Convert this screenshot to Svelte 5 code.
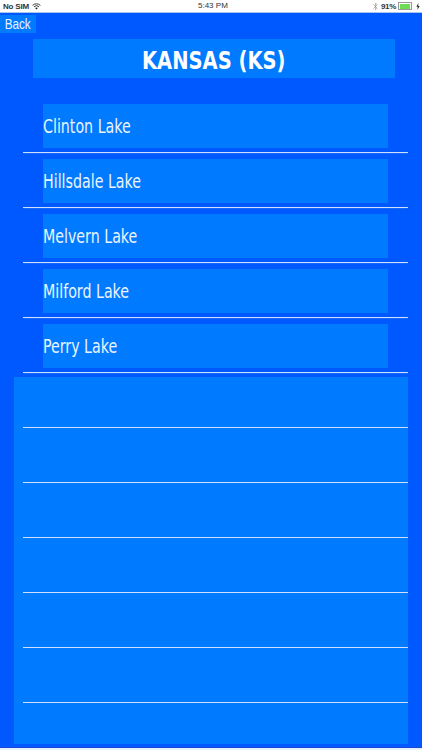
<script>
  const lakes = ['Clinton Lake', 'Hillsdale Lake', 'Melvern Lake', 'Milford Lake', 'Perry Lake'];
  const emptyRows = [0, 1, 2, 3, 4, 5, 6];
</script>

<div class="page">
  <header class="status">
    <div class="carrier">
      <span class="squeeze">No SIM</span>
      <svg width="9" height="7" viewBox="0 0 9 7">
        <path d="M0.6 2.4a5.6 5.6 0 0 1 7.8 0M2 3.8a3.6 3.6 0 0 1 5 0" fill="none" stroke="#222" stroke-width="0.9" />
        <path d="M4.5 6.6L3.1 5.1a2 2 0 0 1 2.8 0z" fill="#222" />
      </svg>
    </div>
    <span class="time">5:43 PM</span>
    <div class="power">
      <svg width="5" height="9" viewBox="0 0 5 9">
        <path d="M0.4 2.4L4.2 6.2L2.4 8V1L4.2 2.8L0.4 6.6" fill="none" stroke="#999" stroke-width="0.7" />
      </svg>
      <span class="pct">91%</span>
      <div class="battery"><div class="charge"></div></div>
      <svg width="4" height="7" viewBox="0 0 4 7">
        <path d="M2.4 0L0.4 3.8H1.8L1.4 7L3.6 3H2.2z" fill="#222" />
      </svg>
    </div>
  </header>

  <button class="back"><span>Back</span></button>
  <h1 class="title"><span>KANSAS (KS)</span></h1>

  <ul class="lakes">
    {#each lakes as lake}
      <li class="row">
        <div class="cell"><span>{lake}</span></div>
      </li>
    {/each}
  </ul>

  <ul class="empty">
    {#each emptyRows as r}
      <li class="blank"></li>
    {/each}
  </ul>

  <div class="edge"></div>
</div>

<style>
  :global(body) {
    margin: 0;
    background: #0059ff;
  }

  .page {
    width: 422px;
    height: 750px;
    overflow: hidden;
    background: #0059ff;
    display: flex;
    flex-direction: column;
    font-family: "DejaVu Sans Condensed", "DejaVu Sans", sans-serif;
    color: #eaf4ff;
  }

  .status {
    height: 12px;
    flex: none;
    background: #fff;
    border-bottom: 1px solid #a9c4ee;
    padding: 0 2px 0 3px;
    display: flex;
    align-items: center;
    justify-content: space-between;
    position: relative;
    font-family: "Liberation Sans", sans-serif;
    font-size: 8px;
    font-weight: 700;
    color: #333;
  }

  .carrier, .power {
    display: flex;
    align-items: center;
    gap: 3px;
  }

  .time {
    position: absolute;
    left: 198px;
    top: 1px;
    font-weight: 400;
  }

  .pct {
    letter-spacing: -0.3px;
    margin-right: -1px;
  }

  .squeeze {
    letter-spacing: -0.2px;
  }

  .battery {
    width: 11px;
    height: 5px;
    padding: 0.5px;
    border: 0.5px solid #999;
    margin-right: 1px;
  }

  .charge {
    width: 91%;
    height: 100%;
    background: #6fdc55;
  }

  .back {
    align-self: flex-start;
    width: 36px;
    height: 18px;
    margin-top: 2px;
    padding: 0 0 2px;
    border: 0;
    background: #007aff;
    color: #eaf4ff;
    font-family: "Liberation Sans", sans-serif;
    font-size: 15px;
  }

  .back span {
    display: inline-block;
    transform: scaleX(0.78);
  }

  .title {
    flex: none;
    margin: 6px 27px 0 33px;
    height: 39px;
    line-height: 43px;
    background: #007aff;
    color: #fff;
    text-align: center;
    font-size: 25px;
    font-weight: 700;
  }

  .title span {
    display: inline-block;
    transform: scaleX(0.867);
  }

  .lakes, .empty {
    list-style: none;
    margin: 0;
    padding: 0;
  }

  .lakes {
    margin: 20px 14px 0 23px;
  }

  .row {
    height: 48px;
    border-bottom: 1px solid #cfe0ff;
    padding-top: 6px;
    box-shadow: 0 1px 1px -1px rgba(150, 190, 255, 0.8);
  }

  .cell {
    margin: 0 20px;
    height: 44px;
    line-height: 45px;
    background: #007aff;
    font-size: 20px;
  }

  .cell span {
    display: inline-block;
    transform: scaleX(0.79);
    transform-origin: left center;
  }

  .empty {
    flex: none;
    margin: 4px 14px 0 14px;
    padding-left: 9px;
    background: #007aff;
    height: 367px;
    overflow: hidden;
  }

  .blank {
    height: 54px;
    border-bottom: 1px solid #cfe0ff;
  }

  .blank:first-child {
    height: 50px;
  }

  .edge {
    margin-top: auto;
    height: 2px;
    background: #e4f1ff;
    border-top: 1px solid #1a47d6;
  }
</style>
